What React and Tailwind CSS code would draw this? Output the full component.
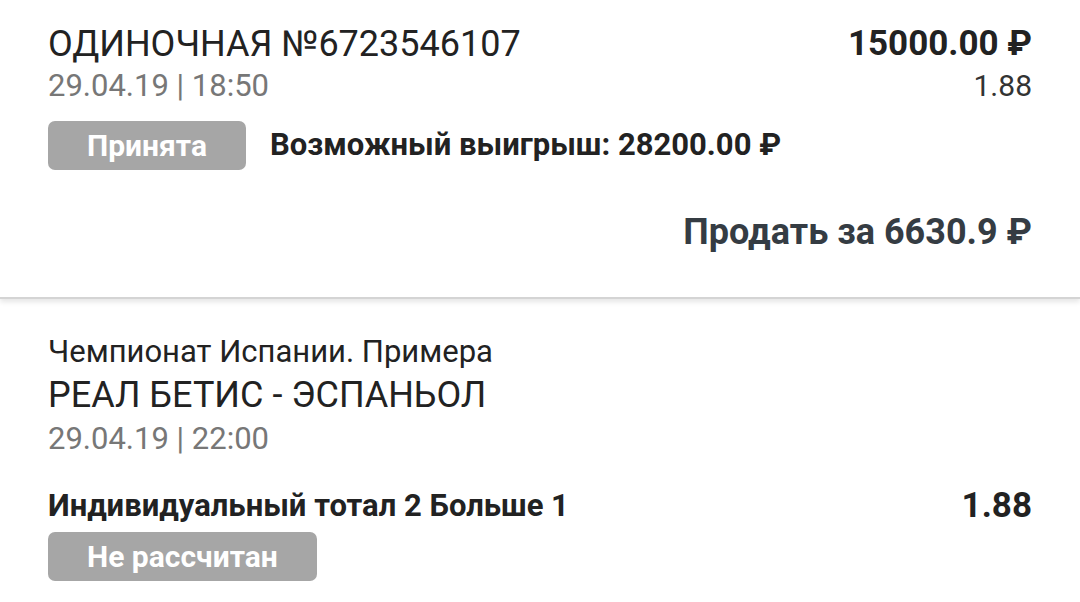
const bet = {
  title: 'ОДИНОЧНАЯ №6723546107',
  date: '29.04.19 | 18:50',
  amount: '15000.00 ₽',
  coef: '1.88',
  status: 'Принята',
  win: 'Возможный выигрыш: 28200.00 ₽',
  sell: 'Продать за 6630.9 ₽',
};

const event = {
  league: 'Чемпионат Испании. Примера',
  match: 'РЕАЛ БЕТИС - ЭСПАНЬОЛ',
  date: '29.04.19 | 22:00',
  outcome: 'Индивидуальный тотал 2 Больше 1',
  coef: '1.88',
  status: 'Не рассчитан',
};

function StatusPill({ children }) {
  return (
    <span className="inline-flex h-[49px] items-center rounded-[7px] bg-[#a6a6a6] px-[39px] text-[30px] font-bold text-white">
      {children}
    </span>
  );
}

export default function App() {
  return (
    <div
      className="min-h-[602px] w-[1080px] overflow-hidden bg-white text-[#222]"
      style={{ fontFamily: 'Roboto, "Noto Sans", sans-serif' }}
    >
      <section className="border-b-2 border-[#d4d4d4] px-[48px] pt-[22px] pb-[43px] shadow-[0_3px_5px_rgba(0,0,0,0.10)]">
        <div className="flex items-start justify-between">
          <div>
            <h1 className="text-[36px] leading-[44px] font-normal">{bet.title}</h1>
            <p className="text-[31px] leading-[40px] text-[#777]">{bet.date}</p>
          </div>
          <div className="text-right">
            <p className="text-[35px] leading-[44px] font-bold">{bet.amount}</p>
            <p className="text-[30px] leading-[40px] text-[#333]">{bet.coef}</p>
          </div>
        </div>
        <div className="mt-[15px] flex items-center gap-[24px]">
          <StatusPill>{bet.status}</StatusPill>
          <span className="text-[31px] font-bold">{bet.win}</span>
        </div>
        <div className="mt-[40px] flex justify-end">
          <span className="text-[36px] leading-[44px] font-bold text-[#353c43]">{bet.sell}</span>
        </div>
      </section>

      <section className="px-[48px] pt-[34px]">
        <p className="text-[31px] leading-[38px]">{event.league}</p>
        <p className="text-[36px] leading-[48px]">{event.match}</p>
        <p className="text-[31px] leading-[40px] text-[#777]">{event.date}</p>
        <div className="mt-[27px] flex items-center justify-between">
          <span className="text-[31px] leading-[40px] font-bold">{event.outcome}</span>
          <span className="text-[35px] leading-[40px] font-bold">{event.coef}</span>
        </div>
        <div className="mt-[6px]">
          <StatusPill>{event.status}</StatusPill>
        </div>
      </section>
    </div>
  );
}
